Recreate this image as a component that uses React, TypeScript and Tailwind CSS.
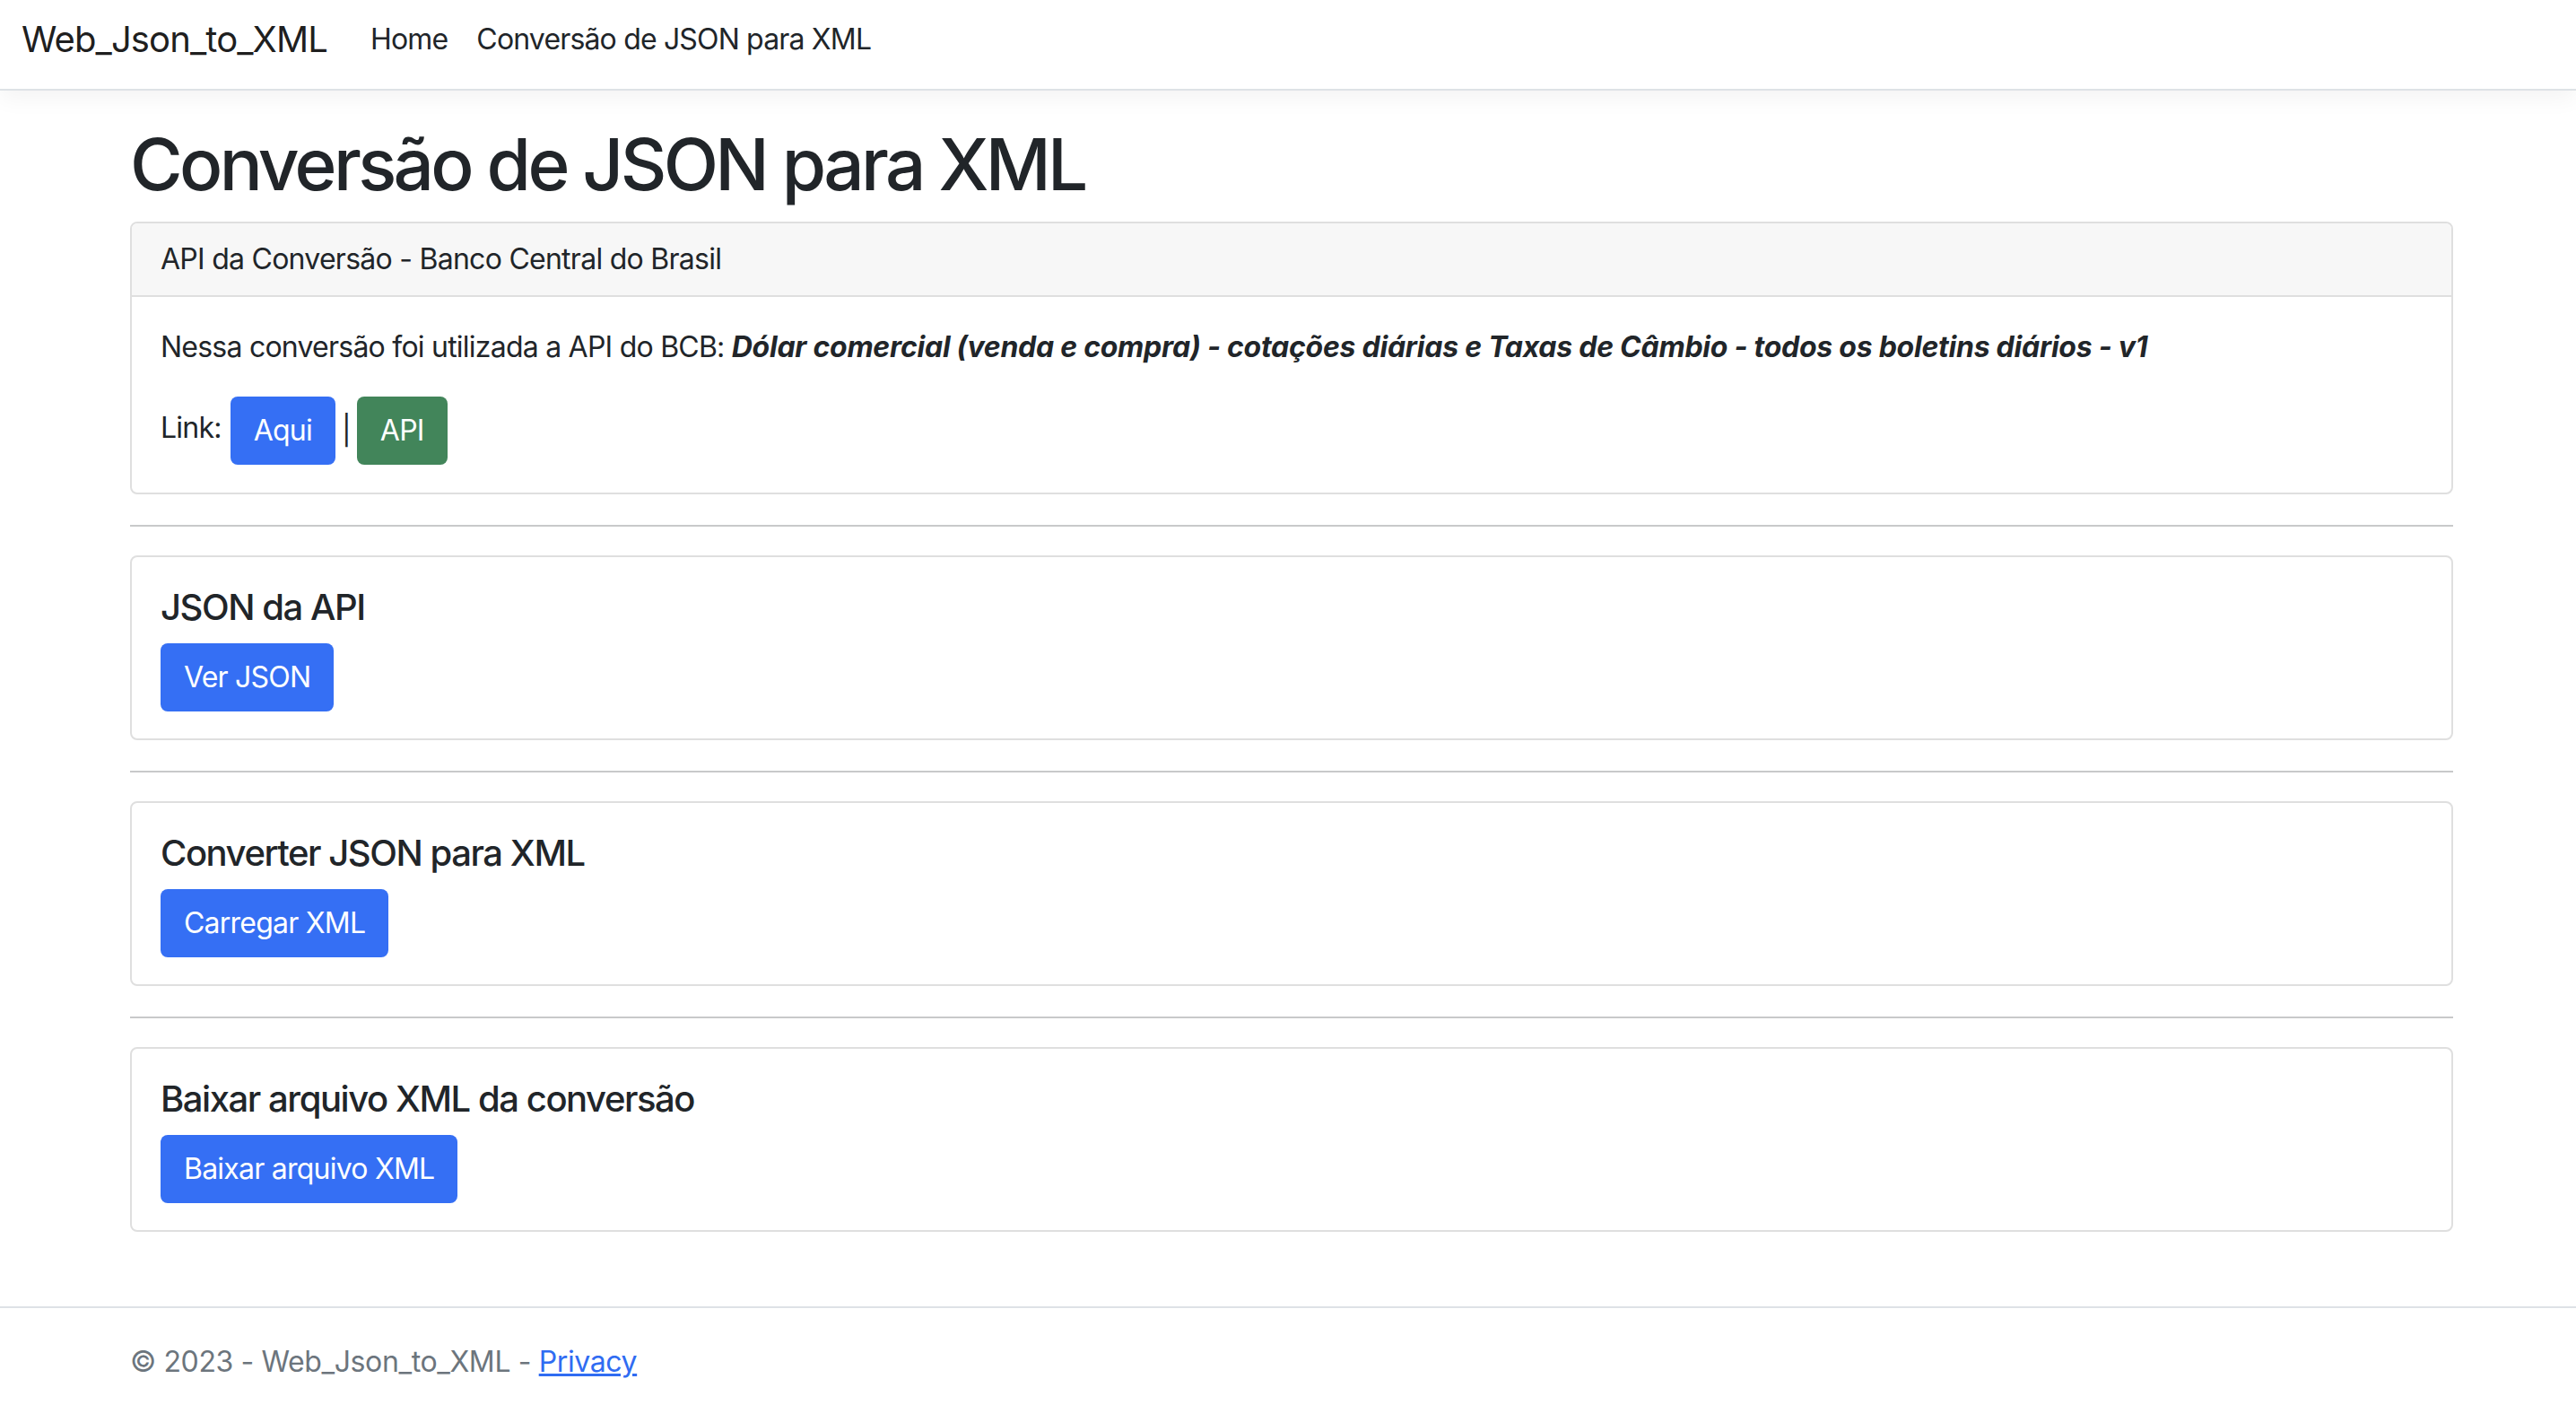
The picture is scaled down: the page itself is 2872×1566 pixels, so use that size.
import React from "react";

const font = { fontFamily: "Inter, 'Noto Sans', 'Liberation Sans', sans-serif" };

function Btn({ children, green }: { children: React.ReactNode; green?: boolean }) {
  return (
    <span
      className={
        "inline-flex h-[76px] items-center rounded-[8px] px-[26px] text-[32px] leading-[48px] tracking-[-0.024em] text-white " +
        (green ? "bg-[#42855a]" : "bg-[#356ff4]")
      }
    >
      {children}
    </span>
  );
}

function Section({ title, button }: { title: string; button: string }) {
  return (
    <div className="rounded-[8px] border-2 border-[#dfdfdf] px-[32px] pt-[32px] pb-[30px]">
      <h5 className="mb-[16px] text-[40px] leading-[48px] font-medium tracking-[-0.036em] text-[#212529]">{title}</h5>
      <Btn>{button}</Btn>
    </div>
  );
}

function Hr() {
  return <div className="mt-[34px] mb-[32px] h-[2px] bg-[#c8c9ca]" />;
}

export default function App() {
  return (
    <div className="flex h-[1566px] flex-col overflow-hidden bg-white text-[#212529]" style={font}>
      <nav className="relative z-10 flex h-[101px] shrink-0 items-center border-b-2 border-[#dee2e6] bg-white pb-[12px] pl-[24px] shadow-[0_8px_24px_rgba(0,0,0,0.05)]">
        <span className="mr-[32px] text-[40px] leading-[60px] tracking-[-0.022em] text-[rgba(0,0,0,0.9)]">Web_Json_to_XML</span>
        <span className="px-[16px] text-[32px] leading-[48px] tracking-[-0.026em] text-[#212529]">Home</span>
        <span className="px-[16px] text-[32px] leading-[48px] tracking-[-0.026em] text-[#212529]">Conversão de JSON para XML</span>
      </nav>

      <main className="ml-[145px] w-[2590px] flex-1">
        <h1 className="mt-[34px] mb-[16px] text-[80px] leading-[96px] font-medium tracking-[-0.046em]">Conversão de JSON para XML</h1>

        <div className="overflow-hidden rounded-[8px] border-2 border-[#dfdfdf]">
          <div className="border-b-2 border-[#dfdfdf] bg-[#f7f7f7] px-[32px] py-[16px] text-[32px] leading-[48px] tracking-[-0.023em]">
            API da Conversão - Banco Central do Brasil
          </div>
          <div className="px-[32px] pt-[32px] pb-[31px] text-[32px] leading-[48px] tracking-[-0.024em]">
            <p className="mb-[31px]">
              Nessa conversão foi utilizada a API do BCB:{" "}
              <b className="font-bold italic tracking-[-0.008em]">
                Dólar comercial (venda e compra) - cotações diárias e Taxas de Câmbio - todos os boletins diários - v1
              </b>
            </p>
            <div className="flex h-[76px] items-center">
              <span className="mb-[6px] mr-[10px]">Link:</span>
              <Btn>Aqui</Btn>
              <span className="mx-[7px]">|</span>
              <Btn green>API</Btn>
            </div>
          </div>
        </div>

        <Hr />
        <Section title="JSON da API" button="Ver JSON" />
        <Hr />
        <Section title="Converter JSON para XML" button="Carregar XML" />
        <Hr />
        <Section title="Baixar arquivo XML da conversão" button="Baixar arquivo XML" />
      </main>

      <footer className="h-[110px] shrink-0 border-t-2 border-[#dee2e6]">
        <div className="ml-[145px] whitespace-nowrap text-[32px] leading-[120px] tracking-[-0.012em] text-[#6c757d]">
          © 2023 - Web_Json_to_XML -{" "}
          <a href="#" className="text-[#306cf2] underline">
            Privacy
          </a>
        </div>
      </footer>
    </div>
  );
}
